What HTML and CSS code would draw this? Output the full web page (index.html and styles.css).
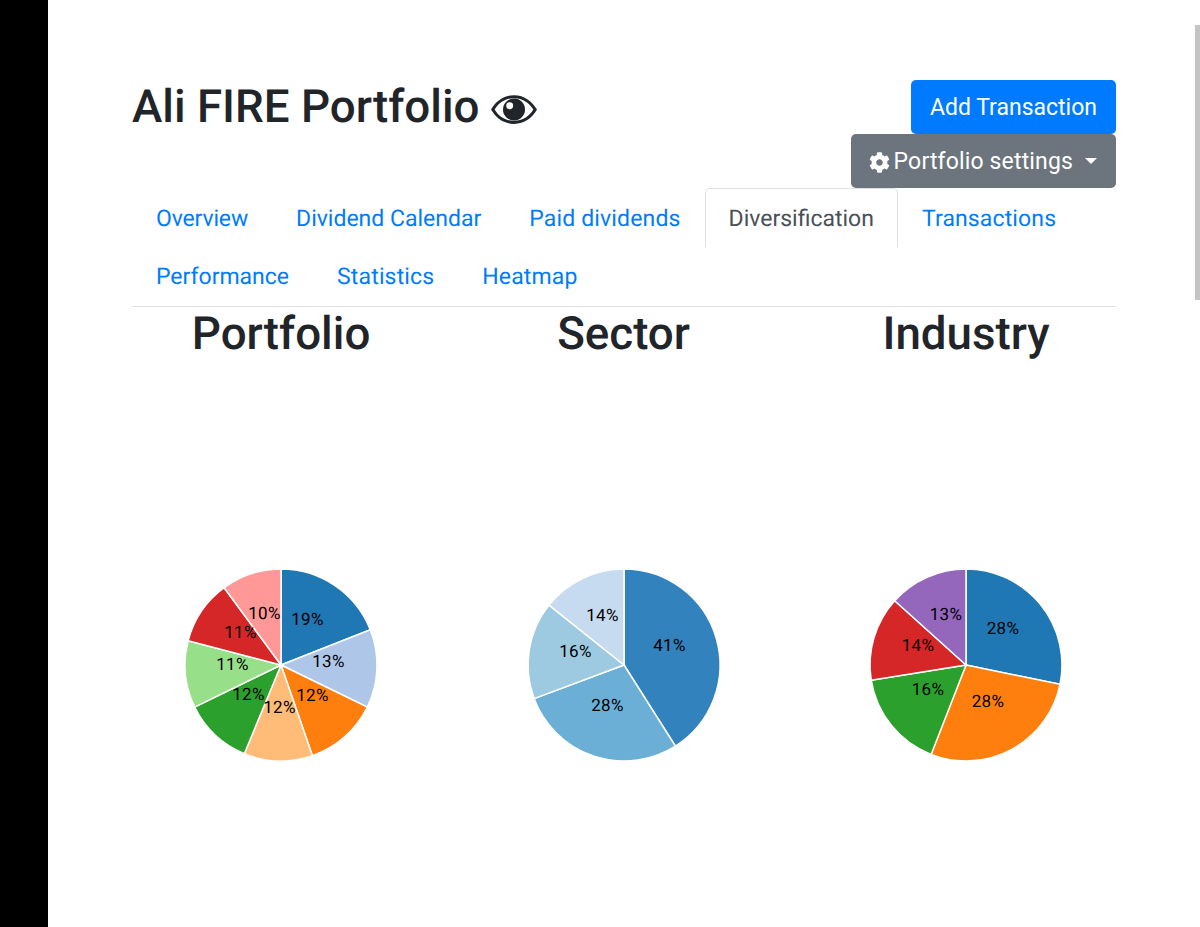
FILE: index.html
```html
<!DOCTYPE html>
<html lang="en">
<head>
<meta charset="utf-8">
<title>Ali FIRE Portfolio</title>
<link rel="stylesheet" href="styles.css">
</head>
<body>
<div class="page">
  <aside class="strip"></aside>
  <main class="content">
    <header class="head">
      <h1 class="title">Ali FIRE Portfolio
        <svg class="eye" viewBox="0 0 48 30" aria-hidden="true"><path fill-rule="evenodd" d="M24 0C35 0 43 6.500 48 15 43 23.500 35 30 24 30 13 30 5 23.500 0 15 5 6.500 13 0 24 0ZM24 3.200C15 3.200 8 8 3.800 15 8 22 15 26.800 24 26.800 33 26.800 40 22 44.200 15 40 8 33 3.200 24 3.200Z"/><path fill-rule="evenodd" d="M24 3.500A11.500 11.500 0 1 1 24 26.500 11.500 11.500 0 0 1 24 3.500ZM19.500 7.500A3.600 3.600 0 1 0 19.500 14.700 3.600 3.600 0 0 0 19.500 7.500Z"/></svg>
      </h1>
      <div class="actions">
        <button class="btn primary">Add Transaction</button>
        <button class="btn secondary"><svg class="gear" viewBox="0 0 512 512" aria-hidden="true"><path d="M487.400 315.700l-42.600-24.600c4.300-23.200 4.300-47 0-70.200l42.600-24.600c4.900-2.800 7.100-8.600 5.500-14-11.100-35.600-30-67.800-54.700-94.600-3.800-4.100-10-5.100-14.800-2.300L380.800 110c-17.900-15.400-38.500-27.300-60.800-35.100V25.800c0-5.600-3.900-10.500-9.400-11.700-36.700-8.200-74.300-7.800-109.200 0-5.500 1.200-9.400 6.100-9.400 11.700V75c-22.200 7.900-42.800 19.800-60.800 35.100L88.700 85.500c-4.900-2.800-11-1.900-14.800 2.300-24.700 26.700-43.600 58.900-54.700 94.600-1.700 5.400.6 11.200 5.500 14L67.300 221c-4.300 23.200-4.300 47 0 70.200l-42.600 24.600c-4.900 2.800-7.100 8.600-5.500 14 11.100 35.600 30 67.800 54.700 94.600 3.800 4.100 10 5.100 14.800 2.300l42.600-24.600c17.900 15.400 38.500 27.300 60.800 35.100v49.200c0 5.600 3.900 10.500 9.400 11.700 36.700 8.200 74.300 7.800 109.200 0 5.500-1.200 9.400-6.100 9.400-11.700v-49.200c22.200-7.900 42.800-19.800 60.800-35.100l42.600 24.600c4.900 2.800 11 1.900 14.800-2.300 24.700-26.700 43.600-58.900 54.700-94.600 1.500-5.500-.7-11.300-5.600-14.100zM256 336c-44.100 0-80-35.900-80-80s35.900-80 80-80 80 35.900 80 80-35.900 80-80 80z"/></svg> <span class="btn-label">Portfolio settings</span><span class="caret"></span></button>
      </div>
    </header>
    <nav class="tabs">
      <a class="tab tight">Overview</a>
      <a class="tab flat">Dividend Calendar</a>
      <a class="tab wide">Paid dividends</a>
      <a class="tab flat active">Diversification</a>
      <a class="tab">Transactions</a>
      <a class="tab flat">Performance</a>
      <a class="tab wide">Statistics</a>
      <a class="tab">Heatmap</a>
    </nav>
    <section class="charts">
      <div class="chart">
        <h2 class="chart-title">Portfolio</h2>
        <svg class="pie" viewBox="-171 -276 342 480">
          <g stroke="#fff" stroke-width="1.500">
            <path fill="#1f77b4" d="M0 0V-96A96 96 0 0 1 89.300-35.300Z"/>
            <path fill="#aec7e8" d="M0 0L89.300-35.300A96 96 0 0 1 86.300 42.100Z"/>
            <path fill="#ff7f0e" d="M0 0L86.300 42.100A96 96 0 0 1 31.400 90.700Z"/>
            <path fill="#ffbb78" d="M0 0L31.400 90.700A96 96 0 0 1-36.700 88.700Z"/>
            <path fill="#2ca02c" d="M0 0L-36.700 88.700A96 96 0 0 1-86.300 42.100Z"/>
            <path fill="#98df8a" d="M0 0L-86.300 42.100A96 96 0 0 1-92.900-24.200Z"/>
            <path fill="#d62728" d="M0 0L-92.900-24.200A96 96 0 0 1-56.900-77.300Z"/>
            <path fill="#ff9896" d="M0 0L-56.900-77.300A96 96 0 0 1 0-96Z"/>
          </g>
          <g class="labels">
            <text x="26.500" y="-45">19%</text>
            <text x="47.500" y="-3">13%</text>
            <text x="31.500" y="31">12%</text>
            <text x="-1.500" y="43">12%</text>
            <text x="-32.500" y="30">12%</text>
            <text x="-48.500" y="0">11%</text>
            <text x="-40.500" y="-32">11%</text>
            <text x="-16.500" y="-51">10%</text>
          </g>
        </svg>
      </div>
      <div class="chart">
        <h2 class="chart-title">Sector</h2>
        <svg class="pie" viewBox="-171 -276 342 480">
          <g stroke="#fff" stroke-width="1.500">
            <path fill="#3182bd" d="M0 0V-96A96 96 0 0 1 51.400 81.100Z"/>
            <path fill="#6baed6" d="M0 0L51.400 81.100A96 96 0 0 1-89.900 33.600Z"/>
            <path fill="#9ecae1" d="M0 0L-89.900 33.600A96 96 0 0 1-75-59.900Z"/>
            <path fill="#c6dbef" d="M0 0L-75-59.900A96 96 0 0 1 0-96Z"/>
          </g>
          <g class="labels">
            <text x="45.500" y="-19">41%</text>
            <text x="-16.500" y="41">28%</text>
            <text x="-48.500" y="-13">16%</text>
            <text x="-21.500" y="-49">14%</text>
          </g>
        </svg>
      </div>
      <div class="chart">
        <h2 class="chart-title">Industry</h2>
        <svg class="pie" viewBox="-171 -276 342 480">
          <g stroke="#fff" stroke-width="1.500">
            <path fill="#1f77b4" d="M0 0V-96A96 96 0 0 1 94 19.300Z"/>
            <path fill="#ff7f0e" d="M0 0L94 19.300A96 96 0 0 1-34.900 89.400Z"/>
            <path fill="#2ca02c" d="M0 0L-34.900 89.400A96 96 0 0 1-94.800 15.200Z"/>
            <path fill="#d62728" d="M0 0L-94.800 15.200A96 96 0 0 1-71.300-64.200Z"/>
            <path fill="#9467bd" d="M0 0L-71.300-64.200A96 96 0 0 1 0-96Z"/>
          </g>
          <g class="labels">
            <text x="37" y="-36">28%</text>
            <text x="22" y="37">28%</text>
            <text x="-38" y="25">16%</text>
            <text x="-48" y="-19">14%</text>
            <text x="-20" y="-50">13%</text>
          </g>
        </svg>
      </div>
    </section>
  </main>
</div>
<div class="scroll-thumb"></div>
</body>
</html>
```
FILE: styles.css
```css
* { box-sizing: border-box; }
html, body { margin: 0; height: 100%; overflow: hidden; background: #fff; }
body { font-family: Roboto, "Liberation Sans", sans-serif; font-size: 23px; line-height: 1.5; color: #212529; text-rendering: geometricPrecision; }
.page { display: flex; height: 927px; overflow: hidden; }
.strip { width: 48px; flex: none; background: #000; }
.content { flex: 1; padding: 80px 84px 0; min-width: 0; }
.head { display: flex; justify-content: space-between; align-items: flex-start; }
.title { margin: 0; font-size: 45.700px; font-weight: 500; line-height: 55px; white-space: nowrap; }
.eye { width: 46px; height: 29px; fill: #212529; vertical-align: -2px; }
.actions { display: flex; flex-direction: column; align-items: flex-end; }
.btn { font: inherit; line-height: 34px; padding: 10px 18px 8px; border: 1px solid transparent; border-radius: 5px; color: #fff; display: block; white-space: nowrap; }
.primary { background: #007bff; }
.secondary { background: #6c757d; }
.gear { width: 21px; height: 21px; fill: #fff; vertical-align: -3.500px; margin-left: -1px; margin-right: -1.700px; }
.btn-label { letter-spacing: .15px; }
.caret { display: inline-block; width: 0; height: 0; margin-left: 12px; vertical-align: 5px; border-top: 6.500px solid #fff; border-left: 6.500px solid transparent; border-right: 6.500px solid transparent; }
.tabs { display: flex; flex-wrap: wrap; border-bottom: 1px solid #dee2e6; padding-bottom: 1px; }
.tab { color: #007bff; padding: 12.500px 23px 10.500px; height: 58.500px; line-height: 34px; letter-spacing: .13px; border: 1px solid transparent; border-radius: 5px 5px 0 0; }
.tab.tight { letter-spacing: -.15px; }
.tab.flat { letter-spacing: 0; }
.tab.wide { letter-spacing: .15px; }
.tab.active { color: #495057; border-color: #dee2e6 #dee2e6 #fff; border-bottom: 0; }
.charts { display: grid; grid-template-columns: repeat(3, 342.500px); margin: 0 -22.200px; }
.chart { display: flex; flex-direction: column; align-items: center; }
.chart-title { margin: 0; font-size: 45.700px; font-weight: 500; line-height: 55px; }
.pie { width: 342px; height: 480px; display: block; margin-top: 27px; }
.labels { font-size: 17px; letter-spacing: .3px; fill: #000; text-anchor: middle; dominant-baseline: central; }
.scroll-thumb { position: fixed; right: 0; top: 25px; width: 5px; height: 275px; background: #c4c4c4; }
```
